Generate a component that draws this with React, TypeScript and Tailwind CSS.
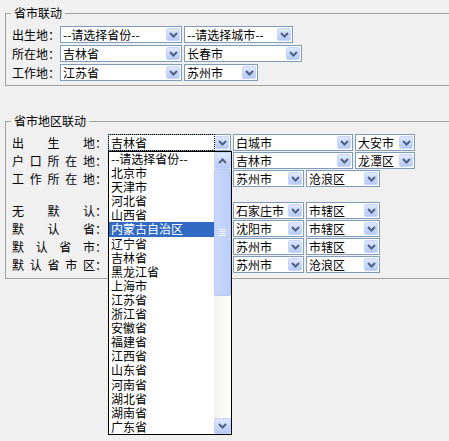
import React from 'react';

const provinces = [
  '--请选择省份--', '北京市', '天津市', '河北省', '山西省', '内蒙古自治区', '辽宁省', '吉林省', '黑龙江省', '上海市',
  '江苏省', '浙江省', '安徽省', '福建省', '江西省', '山东省', '河南省', '湖北省', '湖南省', '广东省',
];

const Chevron: React.FC<{ up?: boolean }> = ({ up }) => (
  <svg width="9" height="6" viewBox="0 0 9 6">
    <path d={up ? 'M1 5 L4.5 1.5 L8 5' : 'M1 1 L4.5 4.5 L8 1'} fill="none" stroke="#4d6185" strokeWidth="2" />
  </svg>
);

const ArrowBtn: React.FC<{ up?: boolean }> = ({ up }) => (
  <div className="m-[1px] flex w-[14px] shrink-0 items-center justify-center rounded-[2px] border border-[#c6d5fc] bg-linear-to-b from-[#dfe8fe] to-[#b7caf6]">
    <Chevron up={up} />
  </div>
);

const Sel: React.FC<{ w: string; text?: string; focus?: boolean }> = ({ w, text, focus }) => (
  <div className={`flex h-[17px] shrink-0 border border-[#7f9db9] bg-white ${w}`}>
    <div
      className={`flex-1 overflow-hidden whitespace-nowrap pl-[2px] text-[12px] leading-[15px] ${
        focus ? 'outline-1 outline-dotted outline-black' : ''
      }`}
    >
      {text}
    </div>
    <ArrowBtn />
  </div>
);

const Label: React.FC<{ chars: string }> = ({ chars }) => (
  <div className="flex w-[96px] shrink-0 text-[12px] leading-[17px]">
    <div className="flex w-[83px] justify-between">
      {chars.split('').map((c, i) => (
        <span key={i}>{c}</span>
      ))}
    </div>
    <span>：</span>
  </div>
);

// open list of the focused province select
const DropList: React.FC = () => (
  <div className="absolute left-0 top-full z-10 flex w-[124px] border border-black bg-white">
    <div className="flex-1">
      {provinces.map((p, i) => (
        <div
          key={p}
          className={`h-[14.1px] whitespace-nowrap pl-[2px] text-[12px] leading-[14px] ${
            i === 5 ? 'bg-[#316ac5] text-white' : ''
          }`}
        >
          {p}
        </div>
      ))}
    </div>
    <div className="flex w-[17px] flex-col bg-linear-to-r from-[#f3f3ef] to-[#fdfdfb]">
      <div className="flex h-[17px] shrink-0 items-center justify-center rounded-[2px] border border-[#c6d5fc] bg-linear-to-b from-[#dfe8fe] to-[#b7caf6]">
        <Chevron up />
      </div>
      <div className="flex h-[127px] shrink-0 items-center justify-center rounded-[2px] border border-[#b4c7f5] bg-linear-to-r from-[#c9d8fc] to-[#bccffa]">
        <div className="flex flex-col gap-[1px]">
          <div className="h-[1px] w-[7px] bg-[#eef4fe]" />
          <div className="h-[1px] w-[7px] bg-[#eef4fe]" />
          <div className="h-[1px] w-[7px] bg-[#eef4fe]" />
          <div className="h-[1px] w-[7px] bg-[#eef4fe]" />
        </div>
      </div>
      <div className="flex-1" />
      <div className="flex h-[16px] shrink-0 items-center justify-center rounded-[2px] border border-[#c6d5fc] bg-linear-to-b from-[#dfe8fe] to-[#b7caf6]">
        <Chevron />
      </div>
    </div>
  </div>
);

export default function App() {
  return (
    <div className="h-[441px] w-full overflow-hidden bg-[#f0f0f0] pt-[6px] font-['Noto_Sans_CJK_SC','Noto_Sans',sans-serif] text-[12px] text-black">
      <fieldset className="ml-[5px] w-[470px] border border-[#a0a0a0] pb-[4px] pl-[6px] pt-[6px]">
        <legend className="ml-[-1px] px-[3px] leading-[14px]">省市联动</legend>
        <div className="flex flex-col gap-[2px]">
          <div className="flex">
            <span className="w-[48px] leading-[17px]">出生地：</span>
            <Sel w="w-[122px]" text="--请选择省份--" />
            <div className="w-[2px]" />
            <Sel w="w-[109px]" text="--请选择城市--" />
          </div>
          <div className="flex">
            <span className="w-[48px] leading-[17px]">所在地：</span>
            <Sel w="w-[122px]" text="吉林省" />
            <div className="w-[2px]" />
            <Sel w="w-[118px]" text="长春市" />
          </div>
          <div className="flex">
            <span className="w-[48px] leading-[17px]">工作地：</span>
            <Sel w="w-[122px]" text="江苏省" />
            <div className="w-[2px]" />
            <Sel w="w-[74px]" text="苏州市" />
          </div>
        </div>
      </fieldset>

      <fieldset className="ml-[5px] mt-[28px] w-[470px] border border-[#a0a0a0] pb-[5px] pl-[6px] pt-[6px]">
        <legend className="ml-[-1px] px-[3px] leading-[14px]">省市地区联动</legend>
        <div className="flex flex-col gap-[1px]">
          <div className="flex">
            <Label chars="出生地" />
            <div className="relative">
              <Sel w="w-[123px]" text="吉林省" focus />
              <DropList />
            </div>
            <div className="w-[2px]" />
            <Sel w="w-[120px]" text="白城市" />
            <div className="w-[2px]" />
            <Sel w="w-[60px]" text="大安市" />
          </div>
          {/* province selects below are covered by the open list */}
          <div className="flex">
            <Label chars="户口所在地" />
            <Sel w="w-[123px]" />
            <div className="w-[2px]" />
            <Sel w="w-[120px]" text="吉林市" />
            <div className="w-[2px]" />
            <Sel w="w-[60px]" text="龙潭区" />
          </div>
          <div className="flex">
            <Label chars="工作所在地" />
            <Sel w="w-[123px]" />
            <div className="w-[2px]" />
            <Sel w="w-[71px]" text="苏州市" />
            <div className="w-[2px]" />
            <Sel w="w-[74px]" text="沧浪区" />
          </div>
          <div className="mt-[14px] flex">
            <Label chars="无默认" />
            <Sel w="w-[123px]" />
            <div className="w-[2px]" />
            <Sel w="w-[71px]" text="石家庄市" />
            <div className="w-[2px]" />
            <Sel w="w-[74px]" text="市辖区" />
          </div>
          <div className="flex">
            <Label chars="默认省" />
            <Sel w="w-[123px]" />
            <div className="w-[2px]" />
            <Sel w="w-[71px]" text="沈阳市" />
            <div className="w-[2px]" />
            <Sel w="w-[74px]" text="市辖区" />
          </div>
          <div className="flex">
            <Label chars="默认省市" />
            <Sel w="w-[123px]" />
            <div className="w-[2px]" />
            <Sel w="w-[71px]" text="苏州市" />
            <div className="w-[2px]" />
            <Sel w="w-[74px]" text="市辖区" />
          </div>
          <div className="flex">
            <Label chars="默认省市区" />
            <Sel w="w-[123px]" />
            <div className="w-[2px]" />
            <Sel w="w-[71px]" text="苏州市" />
            <div className="w-[2px]" />
            <Sel w="w-[74px]" text="沧浪区" />
          </div>
        </div>
      </fieldset>
    </div>
  );
}
